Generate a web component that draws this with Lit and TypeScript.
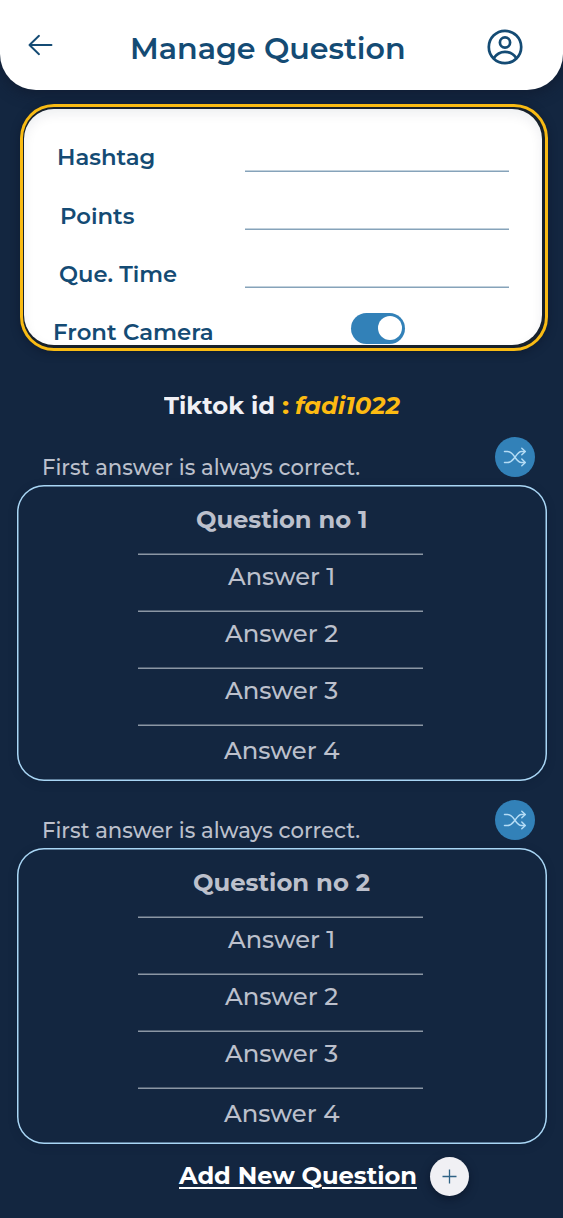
import { LitElement, html, css } from "lit";
import { customElement, property, state } from "lit/decorators.js";
import { styleMap } from "lit/directives/style-map.js";

/* Single line of text that stretches horizontally to fill a given width. */
@customElement("fit-text")
class FitText extends LitElement {
  static styles = css`
    :host { display: block; flex: none; white-space: nowrap; }
    .line { display: inline-block; transform-origin: 0 50%; vertical-align: top; }
    :host([underlined]) .line { text-decoration: underline; text-decoration-thickness: 1.5px; text-underline-offset: 2.5px; }
  `;
  @property({ type: Number }) width = 100;
  @state() private scale = 1;

  firstUpdated() {
    const line = this.renderRoot.querySelector(".line") as HTMLElement;
    const natural = line.offsetWidth;
    if (natural > 0) this.scale = this.width / natural;
  }

  render() {
    this.style.width = `${this.width}px`;
    return html`<span class="line" style=${styleMap({ transform: `scaleX(${this.scale})` })}><slot></slot></span>`;
  }
}

@customElement("question-card")
class QuestionCard extends LitElement {
  static styles = css`
    :host { display: block; height: 363px; }
    .top { display: flex; justify-content: space-between; height: 48.5px; padding: 0 28px 0 42px; }
    .hint { margin-top: 15px; height: 30px; line-height: 30px; font-size: 21.3px; color: #bcc0cc; font-weight: 500; }
    .shuffle { width: 40.5px; height: 40.5px; border-radius: 50%; background: #3281b8; }
    .shuffle svg { display: block; }
    .box {
      box-sizing: border-box; width: 530.5px; height: 296px; margin-left: 16.5px; padding: 1.5px;
      border-radius: 27px; background: #132640;
      box-shadow: inset 0 0 0 1.5px #a9d6f5, 0 2px 10px rgba(10, 20, 40, 0.18);
      display: flex; flex-direction: column; align-items: center; color: #bcc0cc;
    }
    .row {
      box-sizing: border-box; width: 285px; height: 57px; padding-bottom: 13px; margin-right: 2px;
      box-shadow: inset 0 -1.5px #8b96a4; font-size: 24px; font-weight: 500; line-height: 30px;
      display: flex; align-items: center; justify-content: center;
    }
    .row fit-text { margin-left: 2px; }
    .title { height: 68.5px; padding: 0 0 1px; font-weight: 700; font-size: 23.5px; }
    .last { height: 54px; box-shadow: none; padding-bottom: 4px; }
  `;
  @property({ type: Number }) number = 1;
  @property({ type: Number }) titleWidth = 172;

  render() {
    const answers = [107.5, 113.5, 113.5, 115.5];
    return html`
      <div class="top">
        <fit-text class="hint" width="317.5">First answer is always correct.</fit-text>
        <div class="shuffle">
          <svg width="41" height="41" viewBox="0 0 41 41" fill="none" stroke="#b4dcf5" stroke-width="1.5" stroke-linecap="round" stroke-linejoin="round">
            <path d="M9.5 14.500h3c4.500 0 6 4 7.800 6.200c1.600 2.300 3.500 4.800 6 4.800h3.500"/>
            <path d="M9.500 25.500h3c4.500 0 6-4 7.800-5.700c1.600-2.300 3.500-5.300 6-5.300h3.500"/>
            <path d="M26.800 11.200l3.500 3.300-3.500 3.300M26.800 22l3.500 3.500-3.500 3.300"/>
          </svg>
        </div>
      </div>
      <div class="box">
        <div class="row title"><fit-text width=${this.titleWidth}>Question no ${this.number}</fit-text></div>
        ${answers.map((w, i) => html`
          <div class="row ${i === 3 ? "last" : ""}"><fit-text width=${w}>Answer ${i + 1}</fit-text></div>
        `)}
      </div>
    `;
  }
}

@customElement("app-root")
class AppRoot extends LitElement {
  static styles = css`
    :host {
      display: block; width: 563px; height: 1218px; overflow: hidden; background: #132640;
      font-family: Montserrat, Inter, sans-serif; font-weight: 400;
    }
    .header {
      box-sizing: border-box; height: 90px; padding: 0 40px 0 27px; background: #fff;
      border-radius: 0 0 36px 36px; box-shadow: 0 4px 14px rgba(15, 25, 45, 0.7);
      display: flex; align-items: center; color: #144b74;
    }
    .header svg { display: block; flex: none; }
    .heading { margin: 7px auto 0 76px; font-size: 30px; font-weight: 560; line-height: 40px; }
    .user { margin-top: 4px; }
    .frame {
      box-sizing: border-box; width: 528px; height: 247.500px; margin: 13.500px 0 0 19.500px;
      border-radius: 34px; padding: 5.500px 5.500px 6px 4.500px; background: #17212c;
      box-shadow: inset 0 0 0 3px #f9bb14, 0 2px 8px rgba(10, 18, 35, 0.5);
    }
    .panel {
      box-sizing: border-box; height: 100%; overflow: hidden; border-radius: 30px; padding-top: 19px;
      background: #fff; box-shadow: inset 0 5px 12px rgba(20, 30, 60, 0.07);
      display: flex; color: #144b74; font-size: 22.300px; font-weight: 560;
    }
    .labels { width: 221px; }
    .label { display: flex; align-items: center; height: 58.500px; line-height: 30px; }
    .label.camera { height: 50px; padding-top: 7px; box-sizing: border-box; line-height: 22px; }
    .hashtag { padding-left: 32.500px; }
    .points { padding-left: 35.500px; }
    .time { padding-left: 34.500px; }
    .camera { padding-left: 28.500px; }
    .fields { width: 264px; }
    .field { box-sizing: border-box; height: 58px; box-shadow: inset 0 -1.500px #86a3ba; }
    .field.first { height: 44px; }
    .toggle {
      box-sizing: border-box; width: 54px; height: 31px; margin: 24.500px 0 0 106px; padding: 3.500px;
      border-radius: 16px; background: #3281b8; display: flex; justify-content: flex-end;
    }
    .knob { width: 24px; height: 24px; border-radius: 50%; background: #fff; }
    .account {
      display: flex; margin: 40px 0 0 164px; font-size: 23.500px; font-weight: 700; line-height: 30px; color: #f0f0f5;
    }
    .colon { margin-left: 6.500px; color: #fdbb12; }
    .id { margin-left: 5.500px; font-style: italic; color: #fdbb12; }
    .cards { margin-top: 15.500px; }
    .add { display: flex; align-items: center; height: 40px; margin: -6px 0 0 179.400px; color: #fff; font-size: 24px; font-weight: 700; line-height: 30px; }
    .add fit-text { margin-top: -1px; }
    .plus { width: 39px; height: 39px; margin-left: 13.500px; border-radius: 50%; background: #f0f0f4; box-shadow: 0 3px 8px rgba(5, 12, 28, 0.5); }
    .plus svg { display: block; }
  `;

  render() {
    return html`
      <div class="header">
        <svg width="27" height="24" viewBox="0 0 27 24" fill="none" stroke="#144b74" stroke-width="1.9" stroke-linecap="round" stroke-linejoin="round">
          <path d="M24.500 12H2.500M12 2.800L2.500 12l9.500 9.200"/>
        </svg>
        <fit-text class="heading" width="276">Manage Question</fit-text>
        <svg class="user" width="36" height="36" viewBox="0 0 36 36" fill="none" stroke="#144b74" stroke-width="2.700">
          <circle cx="18" cy="18" r="16.200"/>
          <circle cx="18" cy="13.500" r="5.100"/>
          <path d="M6.800 29C9.500 25 13.300 22.800 18 22.800s8.500 2.200 11.200 6.200"/>
        </svg>
      </div>
      <div class="frame">
        <div class="panel">
          <div class="labels">
            <div class="label hashtag"><fit-text width="98">Hashtag</fit-text></div>
            <div class="label points"><fit-text width="74.500">Points</fit-text></div>
            <div class="label time"><fit-text width="118.500">Que. Time</fit-text></div>
            <div class="label camera"><fit-text width="160.500">Front Camera</fit-text></div>
          </div>
          <div class="fields">
            <div class="field first"></div>
            <div class="field"></div>
            <div class="field"></div>
            <div class="toggle"><div class="knob"></div></div>
          </div>
        </div>
      </div>
      <div class="account">
        <fit-text width="111.500">Tiktok id</fit-text>
        <fit-text class="colon" width="7">:</fit-text>
        <fit-text class="id" width="104.500">fadi1022</fit-text>
      </div>
      <div class="cards">
        <question-card .number=${1} .titleWidth=${171}></question-card>
        <question-card .number=${2} .titleWidth=${177}></question-card>
      </div>
      <div class="add">
        <fit-text underlined width="237.500">Add New Question</fit-text>
        <div class="plus">
          <svg width="39" height="39" viewBox="0 0 39 39" stroke="#2f6285" stroke-width="1.300"><path d="M19.500 12.500v14M12.500 19.500h14"/></svg>
        </div>
      </div>
    `;
  }
}
